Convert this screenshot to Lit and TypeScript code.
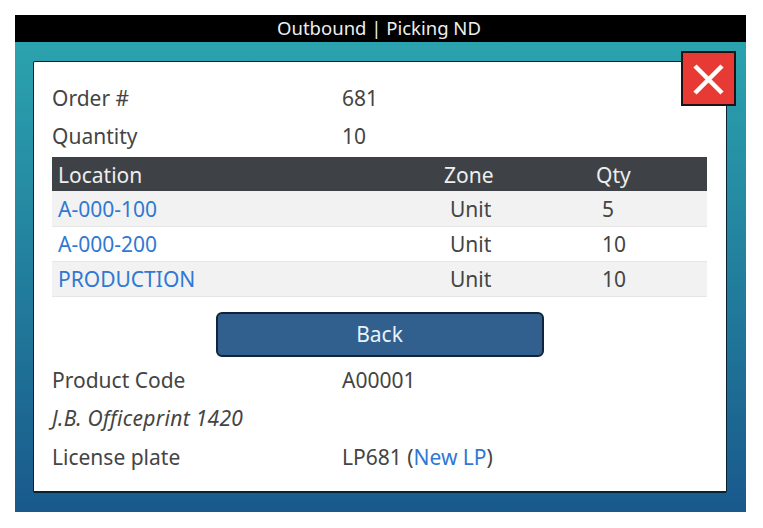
import { LitElement, html, css } from "lit";
import { customElement } from "lit/decorators.js";

const rows = [
  ["A-000-100", "Unit", "5"],
  ["A-000-200", "Unit", "10"],
  ["PRODUCTION", "Unit", "10"],
];

@customElement("app-root")
export class AppRoot extends LitElement {
  static styles = css`
    :host {
      display: block;
      width: 763px;
      height: 528px;
      background: #fff;
      padding: 15px 17px 16px 15px;
      box-sizing: border-box;
      font-family: "Noto Sans", "Open Sans", sans-serif;
      font-size: 21px;
      color: #444;
    }
    .frame {
      height: 497px;
      display: flex;
      flex-direction: column;
    }
    .title {
      height: 27px;
      flex: none;
      background: #000;
      color: #eee;
      font-size: 18.5px;
      line-height: 25px;
      text-align: center;
      padding-right: 3px;
    }
    .stage {
      flex: 1;
      position: relative;
      background: linear-gradient(180deg, #2ba3ae 0%, #19598c 100%);
      padding: 19px 19px 19px 18px;
      box-sizing: border-box;
      display: flex;
    }
    .card {
      flex: 1;
      background: #fff;
      border: 1px solid #06222e;
      border-bottom-width: 2px;
      border-radius: 2px;
      padding: 18px 19px 0 18px;
      box-sizing: border-box;
    }
    .close {
      position: absolute;
      top: 9px;
      right: 10px;
      width: 55px;
      height: 55px;
      box-sizing: border-box;
      background: #e83a35;
      border: 2px solid #1c1414;
      padding-top: 2px;
      display: flex;
      align-items: center;
      justify-content: center;
    }
    .field {
      display: grid;
      grid-template-columns: 290px 1fr;
      height: 38.5px;
      line-height: 37px;
      white-space: nowrap;
    }
    .fields-top {
      height: 77px;
    }
    .fields-top .field {
      line-height: 36px;
    }
    .fields-top .field + .field {
      line-height: 35px;
    }
    table {
      width: 655px;
      border-collapse: collapse;
      table-layout: fixed;
    }
    th {
      background: #3e4247;
      color: #eee;
      font-weight: 400;
      height: 34px;
      padding: 1px 0 0;
      box-sizing: border-box;
      text-align: left;
    }
    td {
      height: 34px;
      padding: 1px 0 0 6px;
      box-sizing: border-box;
      border-bottom: 1px solid #e6e6e6;
      background: #fff;
    }
    tbody tr {
      height: 35px;
    }
    tbody tr:nth-child(odd) td {
      background: #f2f2f2;
    }
    th.c1 {
      padding-left: 6px;
    }
    .c1 {
      width: 392px;
    }
    .c2 {
      width: 152px;
    }
    a {
      color: #2f78d4;
      text-decoration: none;
    }
    .btn-row {
      display: flex;
      justify-content: center;
      padding: 15px 0 5px;
    }
    .btn {
      width: 328px;
      height: 45px;
      box-sizing: border-box;
      background: #31608f;
      border: 2px solid #12243a;
      border-radius: 6px;
      color: #e8f2fa;
      font: inherit;
      padding: 0;
    }
    .desc {
      font-style: italic;
      height: 38.5px;
      line-height: 37px;
      letter-spacing: 0.3px;
      white-space: nowrap;
    }
  `;

  render() {
    return html`
      <div class="frame">
        <div class="title">Outbound | Picking ND</div>
        <div class="stage">
          <div class="card">
            <div class="fields-top">
              <div class="field"><span>Order #</span><span>681</span></div>
              <div class="field"><span>Quantity</span><span>10</span></div>
            </div>
            <table>
              <thead>
                <tr>
                  <th class="c1">Location</th>
                  <th class="c2">Zone</th>
                  <th>Qty</th>
                </tr>
              </thead>
              <tbody>
                ${rows.map(
                  (r) => html`<tr>
                    <td class="c1"><a href="#">${r[0]}</a></td>
                    <td class="c2">${r[1]}</td>
                    <td>${r[2]}</td>
                  </tr>`
                )}
              </tbody>
            </table>
            <div class="btn-row"><button class="btn">Back</button></div>
            <div class="field"><span>Product Code</span><span>A00001</span></div>
            <div class="desc">J.B. Officeprint 1420</div>
            <div class="field">
              <span>License plate</span>
              <span>LP681 (<a href="#">New LP</a>)</span>
            </div>
          </div>
          <div class="close">
            <svg width="33" height="33" viewBox="0 0 33 33">
              <path d="M3 3 L30 30 M30 3 L3 30" stroke="#fff" stroke-width="4.5" fill="none" />
            </svg>
          </div>
        </div>
      </div>
    `;
  }
}
